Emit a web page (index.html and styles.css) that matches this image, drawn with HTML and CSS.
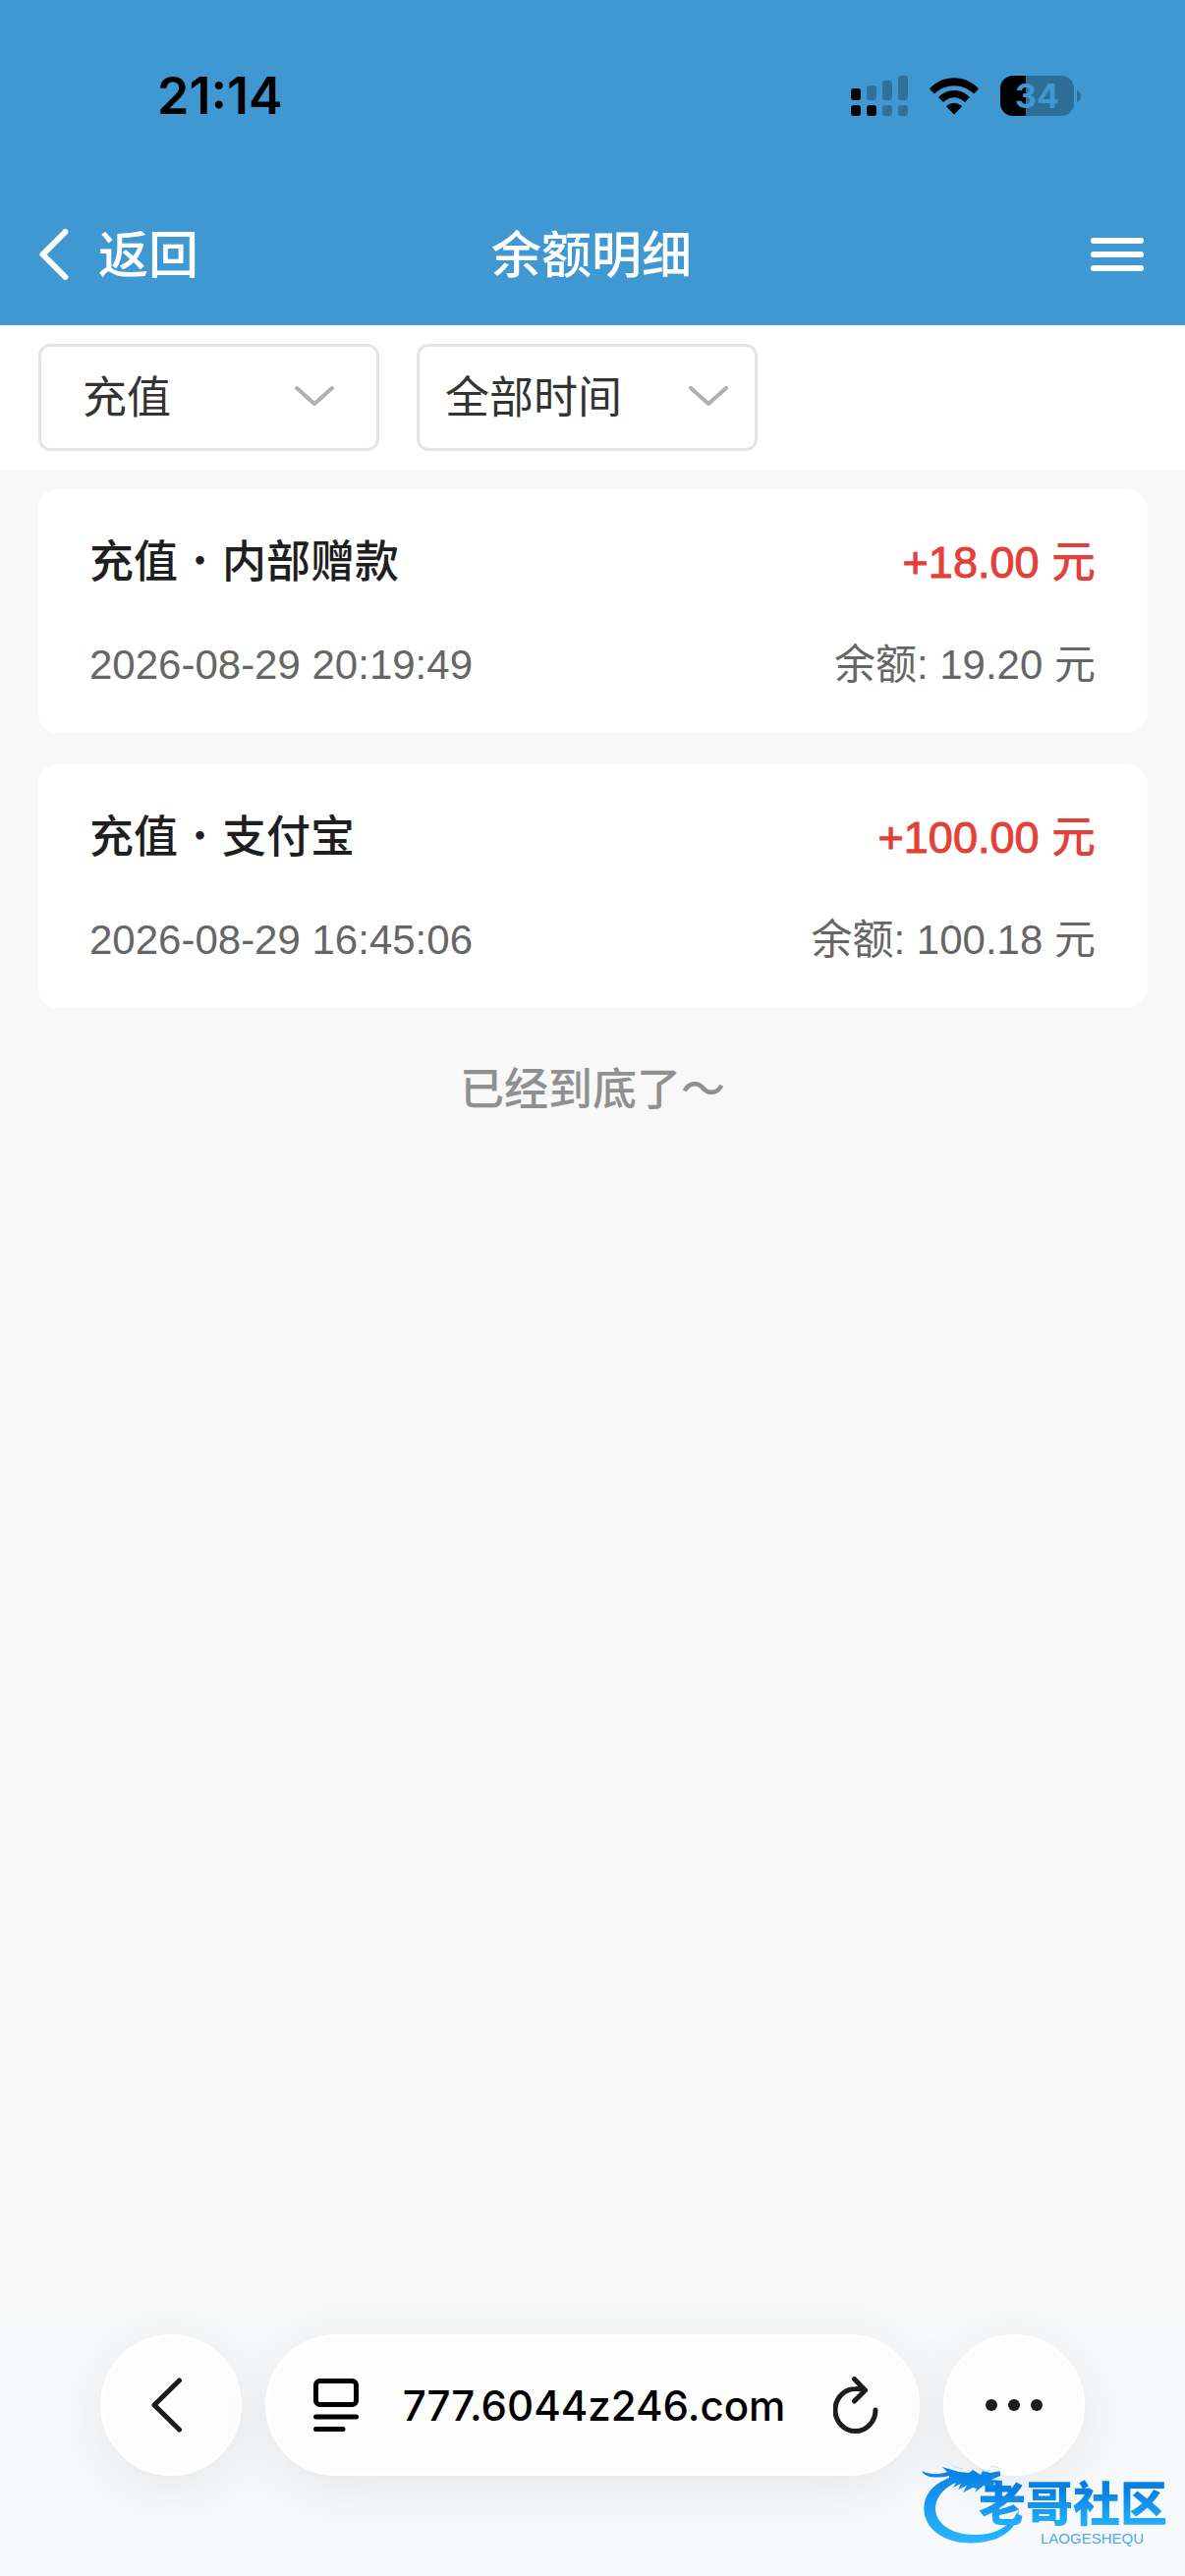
FILE: index.html
```html
<!DOCTYPE html>
<html lang="zh-CN">
<head>
<meta charset="utf-8">
<meta name="viewport" content="width=device-width, initial-scale=1">
<title>余额明细</title>
<link rel="stylesheet" href="styles.css">
</head>
<body>
<div class="screen">
  <header class="top">
    <div class="status">
      <time class="clock">21:14</time>
      <div class="indicators">
        <svg class="signal" viewBox="0 0 58 42" aria-hidden="true">
          <rect x="0" y="13" width="10" height="12" rx="3"/>
          <rect x="0" y="30" width="10" height="11" rx="3"/>
          <rect x="16" y="30" width="10" height="11" rx="3"/>
          <g opacity=".25">
            <rect x="16" y="10" width="10" height="15" rx="3"/>
            <rect x="32" y="5" width="10" height="20" rx="3"/>
            <rect x="48" y="0" width="10" height="25" rx="3"/>
            <rect x="32" y="30" width="10" height="11" rx="3"/>
            <rect x="48" y="30" width="10" height="11" rx="3"/>
          </g>
        </svg>
        <svg class="wifi" viewBox="0 0 50 38" aria-hidden="true">
          <path d="M0 11.500C13-3.500 37-3.500 50 11.500L45 16.500C34 5.500 16 5.500 5 16.500Z"/>
          <path d="M9 20C18 10.500 32 10.500 41 20L36 25C29 18.500 21 18.500 14 25Z"/>
          <path d="M17.500 28.500Q25 23 32.500 28.500Q33 29.500 32 30.500L25 37.500L18 30.500Q17 29.500 17.500 28.500Z"/>
        </svg>
        <div class="battery">
          <span class="battery-level">34</span>
          <svg class="battery-tip" viewBox="0 0 4 12" aria-hidden="true"><path d="M0 0Q4 2 4 6T0 12Z"/></svg>
        </div>
      </div>
    </div>
    <nav class="nav">
      <a class="back" href="#">
        <svg class="back-icon" viewBox="0 0 30 52" aria-hidden="true"><path d="M26.500 3L3.500 26L26.500 49"/></svg>
        <span>返回</span>
      </a>
      <h1 class="title">余额明细</h1>
      <button class="menu" type="button" aria-label="菜单">
        <svg class="menu-icon" viewBox="0 0 54 34" aria-hidden="true"><path d="M3 3H51M3 17H51M3 31H51"/></svg>
      </button>
    </nav>
  </header>

  <form class="filters">
    <div class="field">
      <select class="select select-type" aria-label="类型"><option>充值</option></select>
      <svg class="chevron" viewBox="0 0 40 20" aria-hidden="true"><path d="M2 2L20 18L38 2"/></svg>
    </div>
    <div class="field">
      <select class="select" aria-label="时间"><option>全部时间</option></select>
      <svg class="chevron chevron-time" viewBox="0 0 40 20" aria-hidden="true"><path d="M2 2L20 18L38 2"/></svg>
    </div>
  </form>

  <main class="records">
    <article class="card">
      <div class="row">
        <h2 class="kind">充值<span class="dot">・</span>内部赠款</h2>
        <span class="amount"><span class="number">+18.00</span> 元</span>
      </div>
      <div class="row detail">
        <time>2026-08-29 20:19:49</time>
        <span>余额: 19.20 元</span>
      </div>
    </article>
    <article class="card">
      <div class="row">
        <h2 class="kind">充值<span class="dot">・</span>支付宝</h2>
        <span class="amount"><span class="number">+100.00</span> 元</span>
      </div>
      <div class="row detail">
        <time>2026-08-29 16:45:06</time>
        <span>余额: 100.18 元</span>
      </div>
    </article>
    <p class="end">已经到底了～</p>
  </main>

  <footer class="browser">
    <button class="round round-back" type="button" aria-label="后退">
      <svg class="browser-back" viewBox="0 0 32 56" aria-hidden="true"><path d="M28.500 3L3 28L28.500 53"/></svg>
    </button>
    <div class="address">
      <button class="plain" type="button" aria-label="页面设置">
        <svg class="page-icon" viewBox="0 0 46 54" aria-hidden="true">
          <rect x="2.500" y="2.500" width="41" height="24" rx="4"/>
          <path d="M2.500 39H43.500M2.500 51.500H30"/>
        </svg>
      </button>
      <span class="host">777.6044z246.com</span>
      <button class="plain" type="button" aria-label="重新加载">
        <svg class="reload-icon" viewBox="0 0 46 58" aria-hidden="true">
          <path d="M43 34A20.500 21.500 0 1 1 22.500 12.500Q28 12 32 14"/>
          <path d="M21.500 2.500L32.500 14L21.500 25"/>
        </svg>
      </button>
    </div>
    <button class="round" type="button" aria-label="更多">
      <svg class="more-icon" viewBox="0 0 58 12" aria-hidden="true"><circle cx="6" cy="6" r="6"/><circle cx="29" cy="6" r="6"/><circle cx="52" cy="6" r="6"/></svg>
    </button>
  </footer>

  <div class="brand">
    <svg class="dragon" viewBox="0 0 100 84" aria-hidden="true">
      <defs><linearGradient id="sky" x1="0" y1="0" x2="0" y2="1"><stop offset="0" stop-color="#087fe4"/><stop offset="1" stop-color="#2bb6ff"/></linearGradient></defs>
      <path fill="url(#sky)" d="M28 14C8 22 0 35 3 52C8 72 32 83 58 80C80 78 98 67 99 47C90 64 75 72 54 72C31 72 14 61 14 45C14 34 23 24 35 19L32 24L40 20L37 26L46 22L42 29L52 24L56 25L54 29L63 22L77 25L73 20L79 17L71 16L80 12L80 7L70 9L62 7L60 11L52 6L48 9L38 8L21 3L26 8C18 11 8 11 0 7C3 14 15 15 28 12Z"/>
      <path fill="none" stroke="#bfdcf4" stroke-width="1" d="M30 1Q36 4 42 5M58 5Q66 9 71 6M70 3Q80 1 80 9"/>
    </svg>
    <div class="brand-text">
      <strong class="brand-name">老哥社区</strong>
      <span class="brand-latin">LAOGESHEQU</span>
    </div>
  </div>
</div>
</body>
</html>
```
FILE: styles.css
```css
* {
  box-sizing: border-box;
}

body {
  margin: 0;
  background: #f8f8f8;
  font-family: "Liberation Sans", "Noto Sans CJK SC", sans-serif;
}

h1, h2, p {
  margin: 0;
}

button {
  padding: 0;
  border: 0;
  background: none;
  color: inherit;
  font: inherit;
}

svg {
  display: block;
  flex: none;
}

.screen {
  position: relative;
  display: flex;
  flex-direction: column;
  min-height: 100vh;
}

.top {
  background: #3f98d1;
  color: #fff;
}

.status {
  display: flex;
  justify-content: space-between;
  align-items: center;
  height: 187px;
  padding: 8px 106px 0 160px;
  color: #000;
}

.clock {
  font: 600 52px/60px Inter, sans-serif;
}

.indicators {
  display: flex;
  align-items: center;
  gap: 22px;
}

.signal {
  width: 58px;
  height: 42px;
}

.wifi {
  width: 50px;
  height: 38px;
}

.battery {
  display: flex;
  align-items: center;
  gap: 3px;
}

.battery-level {
  width: 75px;
  height: 41px;
  border-radius: 13px;
  background: linear-gradient(90deg, #000 26px, #2d6d96 26px);
  color: #3f98d1;
  font: 700 34px/41px Inter, sans-serif;
  text-align: center;
}

.battery-tip {
  width: 4px;
  height: 12px;
  fill: #2d6d96;
}

.nav {
  display: grid;
  grid-template-columns: 1fr auto 1fr;
  align-items: center;
  height: 144px;
  padding: 0 42px 0 40px;
}

.back {
  display: flex;
  align-items: center;
  gap: 30px;
  color: #fff;
  font-size: 51px;
  font-weight: 500;
  line-height: 72px;
  text-decoration: none;
}

.back span,
.title {
  padding-top: 4px;
}

.back-icon {
  width: 30px;
  height: 52px;
  fill: none;
  stroke: #fff;
  stroke-width: 6;
  stroke-linecap: round;
  stroke-linejoin: round;
}

.title {
  font-size: 51px;
  font-weight: 500;
  line-height: 72px;
}

.menu {
  justify-self: end;
}

.menu-icon {
  width: 54px;
  height: 34px;
  stroke: #fff;
  stroke-width: 6;
  stroke-linecap: round;
}

.filters {
  display: flex;
  gap: 38px;
  padding: 19px 39px 20px;
  background: #fff;
}

.field {
  display: grid;
  align-items: center;
  width: 347px;
}

.select {
  grid-area: 1 / 1;
  width: 100%;
  height: 109px;
  padding: 2px 26px 0;
  border: 3px solid #e5e5e5;
  border-radius: 12px;
  background: #fff;
  color: #333;
  font: 45px/64px "Liberation Sans", "Noto Sans CJK SC", sans-serif;
  appearance: none;
}

.select-type {
  padding-left: 42px;
}

.chevron {
  grid-area: 1 / 1;
  justify-self: end;
  width: 40px;
  height: 20px;
  margin-right: 46px;
  margin-bottom: 4px;
  fill: none;
  stroke: #b0b0b0;
  stroke-width: 4;
  stroke-linecap: round;
  stroke-linejoin: round;
  pointer-events: none;
}

.chevron-time {
  margin-right: 30px;
}

.records {
  display: flex;
  flex-direction: column;
  flex: 1;
  gap: 32px;
  padding: 19px 39px;
}

.card {
  display: flex;
  flex-direction: column;
  gap: 40px;
  padding: 43px 52px 37px;
  border-radius: 20px;
  background: #fff;
}

.row {
  display: flex;
  justify-content: space-between;
  align-items: center;
  line-height: 64px;
}

.kind {
  color: #1f1f1f;
  font-size: 45px;
  font-weight: 500;
}

.dot {
  font-weight: 300;
}

.amount {
  color: #e34037;
  font-size: 45px;
  font-weight: 500;
}

.number {
  -webkit-text-stroke: 1px #e34037;
}

.detail {
  color: #666;
  font-size: 42px;
}

.end {
  padding-top: 20px;
  color: #909090;
  font-size: 45px;
  font-weight: 500;
  line-height: 64px;
  text-align: center;
}

.browser {
  display: flex;
  gap: 24px;
  padding: 40px 102px 102px;
  background: linear-gradient(#f8f8f8, #f7f9fa 40px);
}

.round,
.address {
  display: flex;
  align-items: center;
  height: 144px;
  border: 3px solid #fff;
  border-radius: 72px;
  background: #fdfdfe;
  box-shadow: 0 12px 60px rgba(0, 0, 0, 0.08);
}

.round {
  flex: none;
  justify-content: center;
  width: 144px;
  color: #1b1c1e;
}

.round-back {
  padding-right: 8px;
}

.address {
  flex: 1;
  justify-content: space-between;
  padding: 0 39px 0 46px;
}

.host {
  padding: 2px 4px 0 0;
  color: #000;
  font: 500 42px/52px Inter, sans-serif;
}

.browser-back,
.page-icon,
.reload-icon {
  fill: none;
  stroke: #1b1c1e;
  stroke-width: 5;
  stroke-linecap: round;
  stroke-linejoin: round;
}

.browser-back {
  width: 32px;
  height: 56px;
}

.page-icon {
  width: 46px;
  height: 54px;
  stroke: #000;
}

.reload-icon {
  width: 46px;
  height: 58px;
}

.more-icon {
  width: 58px;
  height: 12px;
  fill: #1b1c1e;
}

.brand {
  position: absolute;
  right: 18px;
  bottom: 30px;
  width: 250px;
}

.dragon {
  width: 100px;
  height: 84px;
}

.brand-text {
  position: absolute;
  right: 0;
  bottom: 0;
  display: flex;
  flex-direction: column;
  align-items: flex-end;
}

.brand-name {
  background: linear-gradient(#087fe4 20%, #22aefc 85%);
  background-clip: text;
  color: transparent;
  font-size: 48px;
  font-weight: 900;
  line-height: 52px;
}

.brand-latin {
  padding-right: 24px;
  color: #4fa9ee;
  font-size: 15px;
  line-height: 16px;
}
```
